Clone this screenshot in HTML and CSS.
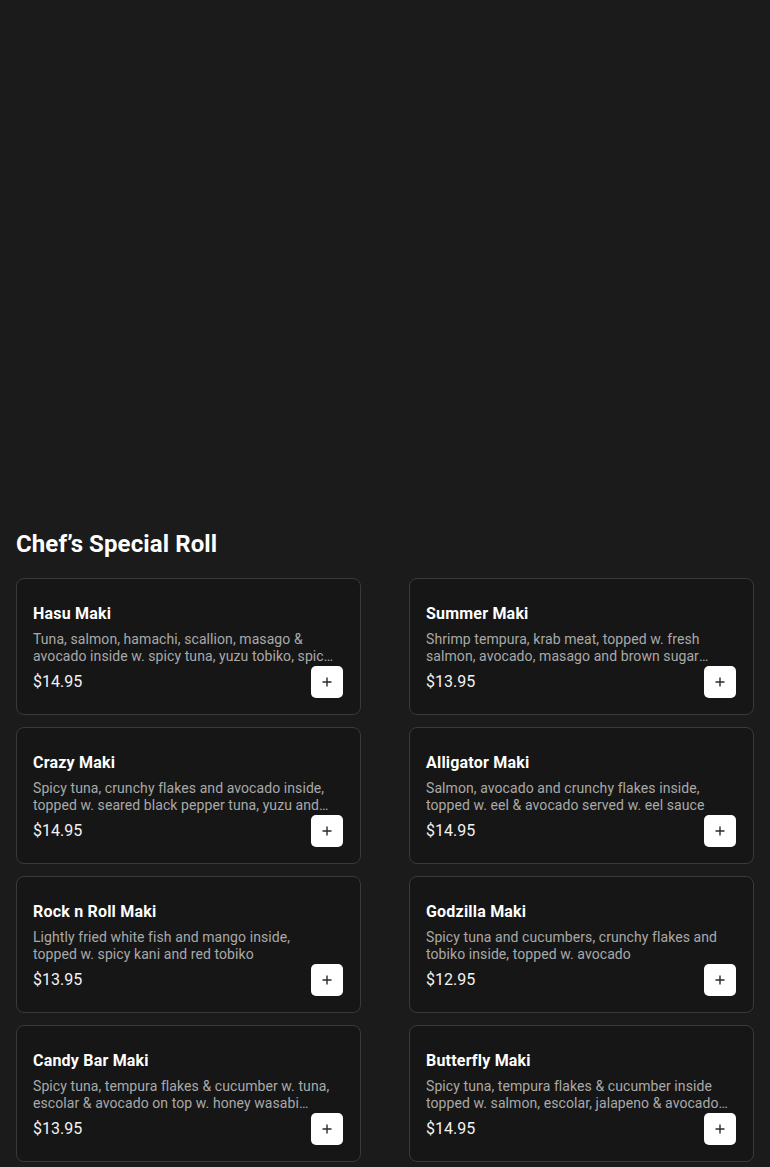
FILE: index.html
```html
<!DOCTYPE html>
<html lang="en">
<head>
<meta charset="utf-8">
<title>Chef’s Special Roll</title>
<link rel="stylesheet" href="styles.css">
</head>
<body>
<div class="hero"></div>
<section class="section">
  <h2 class="section-title">Chef’s Special Roll</h2>
  <div class="grid">
    <div class="card">
      <div class="name">Hasu Maki</div>
      <div class="desc">Tuna, salmon, hamachi, scallion, masago &amp; avocado inside w. spicy tuna, yuzu tobiko, spicy mayo and eel sauce</div>
      <div class="row"><span class="price">$14.95</span><button class="add"><svg viewBox="0 0 12 12" width="12" height="12"><path d="M6 1.5v9M1.5 6h9" stroke="#2a2a2a" stroke-width="1.4" fill="none"/></svg></button></div>
    </div>
    <div class="card">
      <div class="name">Summer Maki</div>
      <div class="desc">Shrimp tempura, krab meat, topped w. fresh salmon, avocado, masago and brown sugar sauce</div>
      <div class="row"><span class="price">$13.95</span><button class="add"><svg viewBox="0 0 12 12" width="12" height="12"><path d="M6 1.5v9M1.5 6h9" stroke="#2a2a2a" stroke-width="1.4" fill="none"/></svg></button></div>
    </div>
    <div class="card">
      <div class="name">Crazy Maki</div>
      <div class="desc">Spicy tuna, crunchy flakes and avocado inside, topped w. seared black pepper tuna, yuzu and spicy mayo</div>
      <div class="row"><span class="price">$14.95</span><button class="add"><svg viewBox="0 0 12 12" width="12" height="12"><path d="M6 1.5v9M1.5 6h9" stroke="#2a2a2a" stroke-width="1.4" fill="none"/></svg></button></div>
    </div>
    <div class="card">
      <div class="name">Alligator Maki</div>
      <div class="desc">Salmon, avocado and crunchy flakes inside, topped w. eel &amp; avocado served w. eel sauce</div>
      <div class="row"><span class="price">$14.95</span><button class="add"><svg viewBox="0 0 12 12" width="12" height="12"><path d="M6 1.5v9M1.5 6h9" stroke="#2a2a2a" stroke-width="1.4" fill="none"/></svg></button></div>
    </div>
    <div class="card">
      <div class="name">Rock n Roll Maki</div>
      <div class="desc">Lightly fried white fish and mango inside, topped w. spicy kani and red tobiko</div>
      <div class="row"><span class="price">$13.95</span><button class="add"><svg viewBox="0 0 12 12" width="12" height="12"><path d="M6 1.5v9M1.5 6h9" stroke="#2a2a2a" stroke-width="1.4" fill="none"/></svg></button></div>
    </div>
    <div class="card">
      <div class="name">Godzilla Maki</div>
      <div class="desc">Spicy tuna and cucumbers, crunchy flakes and tobiko inside, topped w. avocado</div>
      <div class="row"><span class="price">$12.95</span><button class="add"><svg viewBox="0 0 12 12" width="12" height="12"><path d="M6 1.5v9M1.5 6h9" stroke="#2a2a2a" stroke-width="1.4" fill="none"/></svg></button></div>
    </div>
    <div class="card">
      <div class="name">Candy Bar Maki</div>
      <div class="desc">Spicy tuna, tempura flakes &amp; cucumber w. tuna, escolar &amp; avocado on top w. honey wasabi sauce and crunchy flakes</div>
      <div class="row"><span class="price">$13.95</span><button class="add"><svg viewBox="0 0 12 12" width="12" height="12"><path d="M6 1.5v9M1.5 6h9" stroke="#2a2a2a" stroke-width="1.4" fill="none"/></svg></button></div>
    </div>
    <div class="card">
      <div class="name">Butterfly Maki</div>
      <div class="desc">Spicy tuna, tempura flakes &amp; cucumber inside topped w. salmon, escolar, jalapeno &amp; avocado with yuzu sauce</div>
      <div class="row"><span class="price">$14.95</span><button class="add"><svg viewBox="0 0 12 12" width="12" height="12"><path d="M6 1.5v9M1.5 6h9" stroke="#2a2a2a" stroke-width="1.4" fill="none"/></svg></button></div>
    </div>
  </div>
</section>
</body>
</html>
```

FILE: styles.css
```css
* { box-sizing: border-box; }
html, body {
  margin: 0;
  padding: 0;
  background: #1b1b1b;
  color: #fff;
  font-family: Roboto, "Liberation Sans", sans-serif;
}
.hero {
  height: 512px;
}
.section {
  padding: 16px 16px 0;
}
.section-title {
  margin: 0 0 18px;
  font-size: 24px;
  line-height: 32px;
  font-weight: 700;
  letter-spacing: 0.1px;
  color: #fff;
}
.grid {
  display: grid;
  grid-template-columns: 1fr 1fr;
  column-gap: 48px;
  row-gap: 12px;
}
.card {
  background: #161616;
  border: 1px solid #3a3a3a;
  border-radius: 8px;
  padding: 25px 16px 16px;
  display: flex;
  flex-direction: column;
}
.name {
  font-size: 16px;
  line-height: 20px;
  font-weight: 700;
  letter-spacing: 0.2px;
  color: #fff;
  margin-bottom: 7px;
}
.desc {
  font-size: 14px;
  line-height: 17px;
  letter-spacing: 0.08px;
  color: #a9a9a9;
  width: 302px;
  height: 34px;
  overflow: hidden;
  display: -webkit-box;
  -webkit-line-clamp: 2;
  -webkit-box-orient: vertical;
}
.row {
  margin-top: 1px;
  display: flex;
  align-items: center;
  justify-content: space-between;
  height: 32px;
}
.price {
  font-size: 16px;
  line-height: 20px;
  color: #f2f2f2;
}
.add {
  width: 32px;
  height: 32px;
  margin-right: 1px;
  border: none;
  border-radius: 5px;
  background: #fff;
  padding: 0;
  display: flex;
  align-items: center;
  justify-content: center;
  cursor: pointer;
}
```
